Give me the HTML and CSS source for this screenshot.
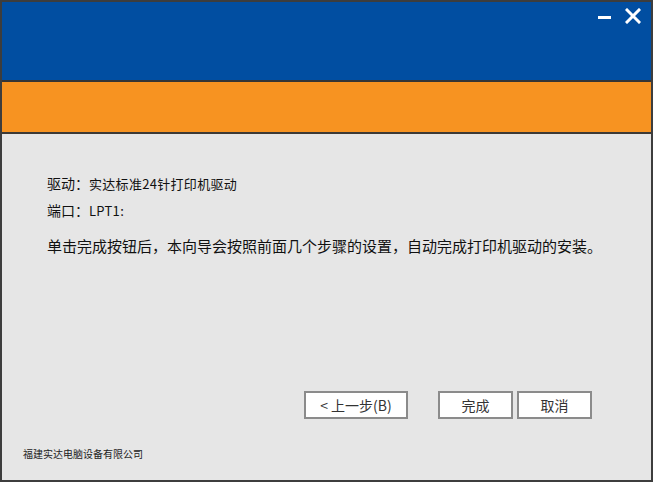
FILE: index.html
```html
<!DOCTYPE html>
<html>
<head>
<meta charset="utf-8">
<link rel="stylesheet" href="styles.css">
</head>
<body>
<div class="window">
  <div class="titlebar">
    <div class="controls">
      <svg class="min" width="14" height="14" viewBox="0 0 14 14"><rect x="0" y="6" width="13" height="3" fill="#fff"/></svg>
      <svg class="close" width="16" height="16" viewBox="0 0 16 16"><path d="M2 2 L14 14 M14 2 L2 14" stroke="#fff" stroke-width="3" stroke-linecap="square"/></svg>
    </div>
  </div>
  <div class="banner"></div>
  <div class="content">
    <div class="info">
      <div class="row"><span class="label">驱动：</span><span class="value">实达标准24针打印机驱动</span></div>
      <div class="row"><span class="label">端口：</span><span class="value">LPT1:</span></div>
    </div>
    <p class="desc">单击完成按钮后，本向导会按照前面几个步骤的设置，自动完成打印机驱动的安装。</p>
    <div class="spacer"></div>
    <div class="buttons">
      <div class="btn back">&lt; 上一步(B)</div>
      <div class="btn finish">完成</div>
      <div class="btn cancel">取消</div>
    </div>
    <div class="footer">福建实达电脑设备有限公司</div>
  </div>
</div>
</body>
</html>
```
FILE: styles.css
```css
* { box-sizing: border-box; }
html, body { margin: 0; padding: 0; }
body { width: 653px; height: 482px; overflow: hidden; font-family: "Noto Sans CJK SC", "Noto Sans", sans-serif; }
.window {
  width: 653px; height: 482px;
  border: 2px solid #3d3d3d;
  display: flex; flex-direction: column;
  background: #e6e6e6;
}
.titlebar {
  height: 80px;
  background: #014ea1;
  border-bottom: 2px solid #353535;
  display: flex; justify-content: flex-end; align-items: flex-start;
}
.controls { display: flex; align-items: center; gap: 13px; padding: 6px 10px 0 0; }
.min { margin-top: 2px; }
.banner {
  height: 52px;
  background: #f79321;
  border-bottom: 2px solid #3d3a36;
}
.content {
  flex: 1;
  display: flex; flex-direction: column;
  padding: 39px 0 0 0;
}
.info { padding-left: 45px; display: flex; flex-direction: column; gap: 7px; }
.row { display: flex; align-items: center; height: 20px; color: #111; }
.label { font-size: 14px; }
.value { font-size: 13px; letter-spacing: 0.3px; }
.desc { margin: 16px 0 0 45px; font-size: 15px; color: #111; line-height: 20px; }
.spacer { flex: 1; }
.buttons { display: flex; padding-left: 302px; }
.btn {
  height: 28px;
  background: #fff;
  border: 2px solid #8b8b8b;
  display: flex; align-items: center; justify-content: center;
  font-size: 14px; color: #333;
}
.back { width: 104px; }
.finish { width: 75px; margin-left: 30px; }
.cancel { width: 75px; margin-left: 4px; }
.footer { font-size: 10px; color: #222; padding: 29px 0 20px 21px; line-height: 12px; }
```
